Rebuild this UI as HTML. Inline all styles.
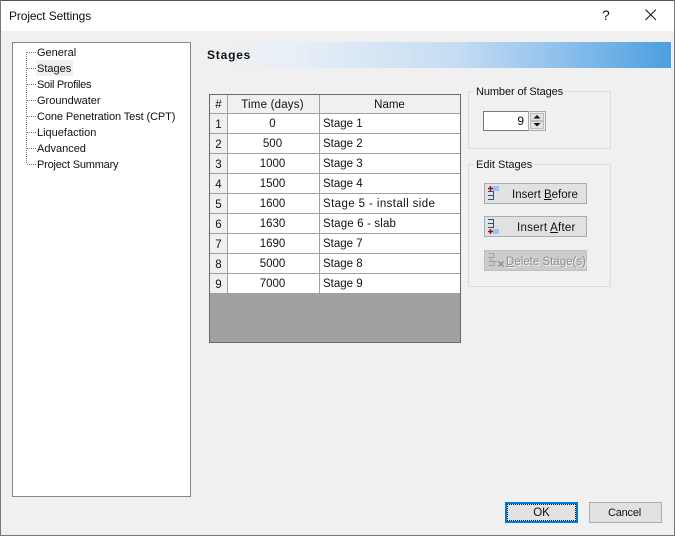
<!DOCTYPE html>
<html><head><meta charset="utf-8">
<style>
html,body{margin:0;padding:0}
body{width:675px;height:536px;overflow:hidden;position:relative;background:#f0f0f0;font-family:"Liberation Sans",sans-serif;font-size:11.5px;color:#111}
div,span.a{position:absolute;box-sizing:border-box}
.t{white-space:nowrap;line-height:14px;height:14px}
.n{font-size:11px}
.c{text-align:center}
.line{background:#a0a0a0}
.btn{background:#e1e1e1;border:1px solid #adadad;text-align:center;white-space:nowrap}
u{text-decoration:underline}
</style></head><body>
<div style="left:0;top:0;width:675px;height:31px;background:#fff"></div>
<div style="left:0;top:0;width:675px;height:1px;background:#555"></div>
<div style="left:0;top:0;width:1px;height:536px;background:#777"></div>
<div style="left:674px;top:0;width:1px;height:536px;background:#777"></div>
<div style="left:0;top:535px;width:675px;height:1px;background:#777"></div>
<div class="t" style="left:9px;top:9px;font-size:12px;letter-spacing:-.12px">Project Settings</div>
<div class="t" style="left:602px;top:8px;font-size:14px">?</div>
<svg style="position:absolute;left:645px;top:9px" width="12" height="12"><path d="M.5.5l10.500 10.500M11 .5L.5 11" stroke="#111" fill="none"/></svg>

<div style="left:12px;top:42px;width:179px;height:455px;background:#fff;border:1px solid #828790"></div>
<svg style="position:absolute;left:26px;top:51px" width="12" height="116"><path d="M.5 1V113M1 1.500H10M1 17.500H10M1 33.500H10M1 49.500H10M1 65.500H10M1 81.500H10M1 97.500H10M1 113.500H10" stroke="#777" stroke-dasharray="1 1" fill="none"/></svg>
<div style="left:36px;top:60px;width:37px;height:16px;background:#f0f0f0"></div>
<div class="t n" style="left:37px;top:46px">General</div>
<div class="t n" style="left:37px;top:62px">Stages</div>
<div class="t n" style="left:37px;top:78px;letter-spacing:-.3px">Soil Profiles</div>
<div class="t n" style="left:37px;top:94px">Groundwater</div>
<div class="t n" style="left:37px;top:110px;letter-spacing:-.1px">Cone Penetration Test (CPT)</div>
<div class="t n" style="left:37px;top:126px">Liquefaction</div>
<div class="t n" style="left:37px;top:142px">Advanced</div>
<div class="t n" style="left:37px;top:158px;letter-spacing:-.2px">Project Summary</div>

<div style="left:200px;top:42px;width:471px;height:26px;background:linear-gradient(90deg,#f0f0f0 0%,#e8eff7 20%,#c5dcf2 55%,#8fc1ec 76%,#4b9fe1 100%)"></div>
<div class="t" style="left:207px;top:48px;font-weight:bold;font-size:12px;letter-spacing:.8px">Stages</div>

<div style="left:209px;top:94px;width:252px;height:249px;background:#a0a0a0;border:1px solid #696969"></div>
<div style="left:210px;top:95px;width:250px;height:18px;background:#f0f0f0"></div>
<div style="left:210px;top:113px;width:17px;height:180px;background:#f0f0f0"></div>
<div style="left:228px;top:114px;width:232px;height:179px;background:#fff"></div>
<div class="line" style="left:227px;top:95px;width:1px;height:198px"></div>
<div class="line" style="left:319px;top:95px;width:1px;height:198px"></div>
<div class="line" style="left:210px;top:113px;width:250px;height:1px"></div>
<div class="line" style="left:210px;top:133px;width:250px;height:1px"></div>
<div class="line" style="left:210px;top:153px;width:250px;height:1px"></div>
<div class="line" style="left:210px;top:173px;width:250px;height:1px"></div>
<div class="line" style="left:210px;top:193px;width:250px;height:1px"></div>
<div class="line" style="left:210px;top:213px;width:250px;height:1px"></div>
<div class="line" style="left:210px;top:233px;width:250px;height:1px"></div>
<div class="line" style="left:210px;top:253px;width:250px;height:1px"></div>
<div class="line" style="left:210px;top:273px;width:250px;height:1px"></div>

<div class="t c" style="left:210px;top:98px;width:17px">#</div>
<div class="t c" style="left:228px;top:98px;width:89px;letter-spacing:.2px">Time (days)</div>
<div class="t c" style="left:320px;top:98px;width:139px">Name</div>

<div class="t c" style="left:210px;top:118px;width:17px">1</div><div class="t c" style="left:228px;top:117px;width:89px">0</div><div class="t" style="left:323px;top:117px">Stage 1</div>
<div class="t c" style="left:210px;top:138px;width:17px">2</div><div class="t c" style="left:228px;top:137px;width:89px">500</div><div class="t" style="left:323px;top:137px">Stage 2</div>
<div class="t c" style="left:210px;top:158px;width:17px">3</div><div class="t c" style="left:228px;top:157px;width:89px">1000</div><div class="t" style="left:323px;top:157px">Stage 3</div>
<div class="t c" style="left:210px;top:178px;width:17px">4</div><div class="t c" style="left:228px;top:177px;width:89px">1500</div><div class="t" style="left:323px;top:177px">Stage 4</div>
<div class="t c" style="left:210px;top:198px;width:17px">5</div><div class="t c" style="left:228px;top:197px;width:89px">1600</div><div class="t" style="left:323px;top:197px;letter-spacing:.4px">Stage 5 - install side</div>
<div class="t c" style="left:210px;top:218px;width:17px">6</div><div class="t c" style="left:228px;top:217px;width:89px">1630</div><div class="t" style="left:323px;top:217px;letter-spacing:.15px">Stage 6 - slab</div>
<div class="t c" style="left:210px;top:238px;width:17px">7</div><div class="t c" style="left:228px;top:237px;width:89px">1690</div><div class="t" style="left:323px;top:237px">Stage 7</div>
<div class="t c" style="left:210px;top:258px;width:17px">8</div><div class="t c" style="left:228px;top:257px;width:89px">5000</div><div class="t" style="left:323px;top:257px">Stage 8</div>
<div class="t c" style="left:210px;top:278px;width:17px">9</div><div class="t c" style="left:228px;top:277px;width:89px">7000</div><div class="t" style="left:323px;top:277px">Stage 9</div>

<div style="left:468px;top:91px;width:143px;height:58px;border:1px solid #dcdcdc"></div>
<div class="t n" style="left:474px;top:85px;padding:0 2px;background:#f0f0f0;letter-spacing:-.1px">Number of Stages</div>
<div style="left:483px;top:111px;width:46px;height:20px;background:#fff;border:1px solid #7a7a7a"></div>
<div class="t" style="left:483px;top:114px;width:41px;text-align:right;font-size:12px">9</div>
<div style="left:528px;top:111px;width:18px;height:20px;background:#f0f0f0;border:1px solid #a9a9a9"></div>
<div style="left:530px;top:113px;width:14px;height:8px;background:#e3e3e3;border:1px solid #bdbdbd"></div>
<div style="left:530px;top:121px;width:14px;height:8px;background:#e3e3e3;border:1px solid #bdbdbd"></div>
<svg style="position:absolute;left:533px;top:115px" width="8" height="13"><path d="M4 0L7.500 3.500H.5ZM.5 8H7.500L4 11.500Z" fill="#111"/></svg>

<div style="left:468px;top:164px;width:143px;height:123px;border:1px solid #dcdcdc"></div>
<div class="t n" style="left:474px;top:158px;padding:0 2px;background:#f0f0f0">Edit Stages</div>

<div class="btn" style="left:484px;top:183px;width:103px;height:21px"></div>
<svg style="position:absolute;left:487px;top:185px" width="14" height="17"><path d="M1 6.500H6.500V14.500H1M1 10.500H6.500" stroke="#2f4f75" fill="none"/><rect x="6" y="1" width="6" height="5" fill="#9cc3ea"/><path d="M1 3.500H6M3.500 1V6" stroke="#8b1020" stroke-width="1.500"/></svg>
<div class="t" style="left:512px;top:188px">Insert <u>B</u>efore</div>

<div class="btn" style="left:484px;top:216px;width:103px;height:21px"></div>
<svg style="position:absolute;left:487px;top:218px" width="14" height="17"><path d="M1 1.500H6.500V9.500H1M1 5.500H6.500" stroke="#2f4f75" fill="none"/><rect x="6" y="11" width="6" height="5" fill="#9cc3ea"/><path d="M1 13.500H6M3.500 11V16" stroke="#8b1020" stroke-width="1.500"/></svg>
<div class="t" style="left:517px;top:221px;letter-spacing:.25px">Insert <u>A</u>fter</div>

<div class="btn" style="left:484px;top:250px;width:103px;height:21px;background:#ccc;border-color:#bfbfbf"></div>
<svg style="position:absolute;left:487px;top:252px" width="19" height="17"><path d="M1.500 1.500H7V5.500H1.500M1.500 9.500H10M1.500 13.500H7V9.500M4 5.500V9.500" stroke="#a0a0a0" fill="none"/><path d="M11.500 9.500l5 5M16.500 9.500l-5 5" stroke="#8e8e8e" stroke-width="1.500"/></svg>
<div class="t" style="left:507px;top:256px;color:#f4f4f4"><u>D</u>elete Stage(s)</div>
<div class="t" style="left:506px;top:255px;color:#8f8f8f"><u>D</u>elete Stage(s)</div>

<div class="btn" style="left:505px;top:502px;width:73px;height:21px;border:2px solid #0078d7;line-height:18px;background:#e1e1e1;outline:1px dotted #111;outline-offset:-3px">OK</div>
<div class="btn n" style="left:589px;top:502px;width:73px;height:21px;line-height:20px;padding-right:2px;letter-spacing:-.2px">Cancel</div>
</body></html>
